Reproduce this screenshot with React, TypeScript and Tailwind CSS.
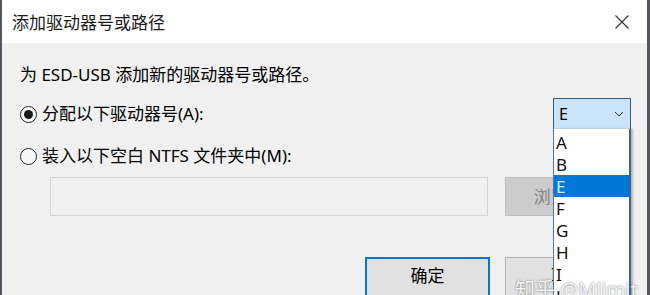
import React from 'react';

const font = { fontFamily: '"Noto Sans", "Noto Sans CJK SC", sans-serif' };

const letters = ['A', 'B', 'E', 'F', 'G', 'H', 'I', 'J'];

const Radio: React.FC<{ checked?: boolean }> = ({ checked }) => (
  <span className="w-[17px] h-[17px] rounded-full border border-[#222] bg-[#f7f7f7] flex items-center justify-center shrink-0">
    {checked && <span className="w-[9px] h-[9px] rounded-full bg-[#1a1a1a]" />}
  </span>
);

const App: React.FC = () => {
  return (
    <div
      className="relative w-[650px] h-[295px] overflow-hidden flex flex-col border-l-2 border-r-[3px] border-[#55555f] bg-[#f0f0f0] text-black"
      style={font}
    >
      {/* title bar */}
      <div className="h-[43px] shrink-0 bg-white flex items-center justify-between pl-[10px] pr-[17px]">
        <span className="text-[17px] leading-none text-[#1a1a1a] pt-[1px]">添加驱动器号或路径</span>
        <svg width="16" height="16" viewBox="0 0 16 16">
          <path d="M1.5 1.5 L14.5 14.5 M14.5 1.5 L1.5 14.5" stroke="#333" strokeWidth="1.1" fill="none" />
        </svg>
      </div>

      {/* body */}
      <div className="flex-1 flex flex-col pl-[18px] pr-[16px]">
        <p className="mt-[20px] text-[17px] leading-6">为 ESD-USB 添加新的驱动器号或路径。</p>

        <div className="mt-[11px] h-[32px] flex items-center">
          <Radio checked />
          <span className="ml-[5px] text-[17px] leading-6">分配以下驱动器号(A):</span>
          <div className="relative ml-auto w-[78px] h-[32px]">
            <div className="h-full flex items-center justify-between pl-[5px] pr-[6px] border border-[#2f5f8f] bg-[#cce4f7]">
              <span className="text-[16px] leading-none">E</span>
              <svg width="10" height="6" viewBox="0 0 10 6">
                <path d="M1 1 L5 5 L9 1" stroke="#333" strokeWidth="1" fill="none" />
              </svg>
            </div>
            {/* open list */}
            <div className="absolute left-0 top-[31px] w-[78px] h-[200px] z-10 bg-white border-l border-[#4a7aa6] border-r-2 border-r-[#3a6896] shadow-[2px_0_2px_rgba(0,0,0,0.25)] pt-[2px]">
              {letters.map((l) => (
                <div
                  key={l}
                  className={
                    'h-[22px] flex items-center pl-[2px] text-[17px] leading-none ' +
                    (l === 'E' ? 'bg-[#0078d7] text-[#d8f0ff]' : 'text-[#111]')
                  }
                >
                  {l}
                </div>
              ))}
            </div>
          </div>
        </div>

        <div className="mt-[14px] h-[24px] flex items-center">
          <Radio />
          <span className="ml-[5px] text-[17px] leading-6">装入以下空白 NTFS 文件夹中(M):</span>
        </div>

        <div className="mt-[9px] flex items-center">
          <div className="ml-[30px] w-[438px] h-[39px] border border-[#d4d4d4] bg-[#f0f0f0]" />
          <button className="ml-auto w-[126px] h-[39px] bg-[#cccccc] border border-[#bfbfbf] text-[#838383] text-[17px]">
            浏览(R)...
          </button>
        </div>

        <div className="mt-[41px] flex items-start justify-end gap-[15px]">
          <button className="w-[125px] h-[40px] border-2 border-[#0078d7] bg-[#e1e1e1] text-[17px] text-black pb-[3px]">
            确定
          </button>
          <button className="w-[126px] h-[40px] border border-[#adadad] bg-[#e1e1e1] text-[17px] text-black pb-[3px]">
            取消
          </button>
        </div>
      </div>

      {/* watermark */}
      <span className="absolute left-[513px] top-[278px] z-20 text-[20px] leading-6 text-white/90 [text-shadow:0_0_2px_rgba(0,0,0,0.6)] whitespace-nowrap">
        知乎 @Mlimit
      </span>
    </div>
  );
};

export default App;
